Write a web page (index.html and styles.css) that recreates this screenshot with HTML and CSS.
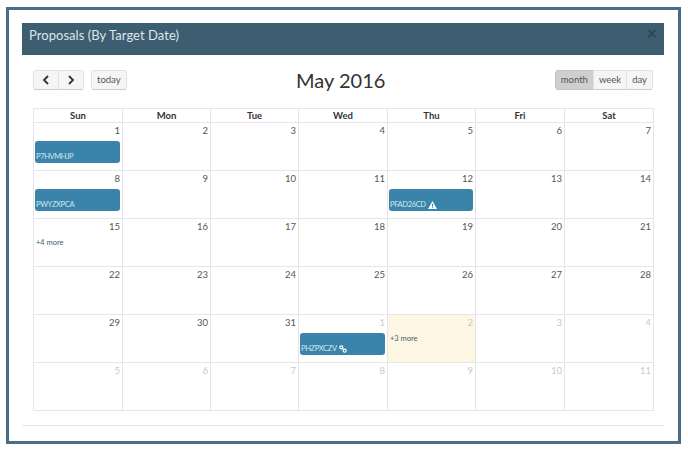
FILE: index.html
```html
<!DOCTYPE html>
<html lang="en">

<head>
    <meta charset="UTF-8">
    <meta name="viewport" content="width=device-width, initial-scale=1.0">
    <title>Proposals (By Target Date)</title>
    <link rel="stylesheet" href="styles.css">
</head>

<body>
    <div class="frame">
        <div class="modal-header">
            <h4>Proposals (By Target Date)</h4>
            <span class="close">&times;</span>
        </div>
        <div class="modal-body">
            <div class="toolbar">
                <div class="toolbar-left">
                    <div class="btn-group">
                        <button class="btn btn-icon">
                            <svg width="8" height="10" viewBox="0 0 8 10"><path d="M6 1 2 5l4 4" fill="none" stroke="#333" stroke-width="1.8"/></svg>
                        </button>
                        <button class="btn btn-icon">
                            <svg width="8" height="10" viewBox="0 0 8 10"><path d="M2 1l4 4-4 4" fill="none" stroke="#333" stroke-width="1.8"/></svg>
                        </button>
                    </div>
                    <button class="btn">today</button>
                </div>
                <h2>May 2016</h2>
                <div class="btn-group">
                    <button class="btn active">month</button>
                    <button class="btn">week</button>
                    <button class="btn">day</button>
                </div>
            </div>
            <table class="calendar">
                <thead>
                    <tr>
                        <th>Sun</th>
                        <th>Mon</th>
                        <th>Tue</th>
                        <th>Wed</th>
                        <th>Thu</th>
                        <th>Fri</th>
                        <th>Sat</th>
                    </tr>
                </thead>
                <tbody>
                    <tr>
                        <td><div class="num">1</div><div class="event">P7HVMHJP</div></td>
                        <td><div class="num">2</div></td>
                        <td><div class="num">3</div></td>
                        <td><div class="num">4</div></td>
                        <td><div class="num">5</div></td>
                        <td><div class="num">6</div></td>
                        <td><div class="num">7</div></td>
                    </tr>
                    <tr>
                        <td><div class="num">8</div><div class="event">PWYZXPCA</div></td>
                        <td><div class="num">9</div></td>
                        <td><div class="num">10</div></td>
                        <td><div class="num">11</div></td>
                        <td>
                            <div class="num">12</div>
                            <div class="event">PFAD26CD
                                <svg width="9" height="8" viewBox="0 0 10 9"><path fill-rule="evenodd" fill="#fff" d="M5 0l5 9H0zM4.4 3v3h1.2V3zm0 3.6v1.1h1.2V6.6z"/></svg>
                            </div>
                        </td>
                        <td><div class="num">13</div></td>
                        <td><div class="num">14</div></td>
                    </tr>
                    <tr>
                        <td><div class="num">15</div><a class="more">+4 more</a></td>
                        <td><div class="num">16</div></td>
                        <td><div class="num">17</div></td>
                        <td><div class="num">18</div></td>
                        <td><div class="num">19</div></td>
                        <td><div class="num">20</div></td>
                        <td><div class="num">21</div></td>
                    </tr>
                    <tr>
                        <td><div class="num">22</div></td>
                        <td><div class="num">23</div></td>
                        <td><div class="num">24</div></td>
                        <td><div class="num">25</div></td>
                        <td><div class="num">26</div></td>
                        <td><div class="num">27</div></td>
                        <td><div class="num">28</div></td>
                    </tr>
                    <tr>
                        <td><div class="num">29</div></td>
                        <td><div class="num">30</div></td>
                        <td><div class="num">31</div></td>
                        <td>
                            <div class="num other">1</div>
                            <div class="event">PHZPXCZV
                                <svg width="8" height="8" viewBox="0 0 9 9"><g fill="none" stroke="#fff" stroke-width="1.3"><circle cx="2.6" cy="2.6" r="1.7"/><circle cx="6.4" cy="6.4" r="1.7"/><path d="M3.6 3.6l1.8 1.8"/></g></svg>
                            </div>
                        </td>
                        <td class="today"><div class="num other">2</div><a class="more">+3 more</a></td>
                        <td><div class="num other">3</div></td>
                        <td><div class="num other">4</div></td>
                    </tr>
                    <tr>
                        <td><div class="num other">5</div></td>
                        <td><div class="num other">6</div></td>
                        <td><div class="num other">7</div></td>
                        <td><div class="num other">8</div></td>
                        <td><div class="num other">9</div></td>
                        <td><div class="num other">10</div></td>
                        <td><div class="num other">11</div></td>
                    </tr>
                </tbody>
            </table>
            <div class="footer-line"></div>
        </div>
    </div>
</body>

</html>
```

FILE: styles.css
```css
body {
    margin: 0;
    background-color: white;
    font-family: Lato, "Open Sans", sans-serif;
    color: #444;
}

.frame {
    box-sizing: border-box;
    width: 675px;
    height: 437px;
    margin: 7px 0 0 6px;
    padding: 13px 14px 0 13px;
    border: 3px solid #4a6f85;
    background-color: white;
}

.modal-header {
    display: flex;
    justify-content: space-between;
    height: 32px;
    padding: 0 7px;
    background-color: #3d5d70;
}

.modal-header h4 {
    margin: 0;
    font-size: 13px;
    font-weight: 400;
    line-height: 25px;
    color: #dfe6ea;
    letter-spacing: 0.05px;
}

.close {
    font-size: 18px;
    font-weight: 700;
    line-height: 20px;
    color: #2f4654;
}

.modal-body {
    padding: 15px 11px 0 11px;
}

.toolbar {
    display: flex;
    justify-content: space-between;
    align-items: center;
    height: 20px;
    margin-bottom: 18px;
}

.toolbar h2 {
    margin: 0;
    font-size: 20px;
    font-weight: 400;
    line-height: 26px;
    color: #333;
}

.toolbar-left {
    display: flex;
    gap: 7px;
}

.btn-group {
    display: flex;
}

.btn {
    height: 20px;
    padding: 0 5px;
    border: 1px solid #e2e2e2;
    border-bottom-color: #ccc;
    border-radius: 3px;
    background-color: #f5f5f5;
    font-family: inherit;
    font-size: 9.5px;
    line-height: 18px;
    color: #555;
}

.btn-icon {
    width: 26px;
    padding: 0;
}

.btn svg {
    display: block;
    margin: 0 auto;
}

.btn-group .btn {
    border-radius: 0;
    margin-left: -1px;
}

.btn-group .btn:first-child {
    border-radius: 3px 0 0 3px;
    margin-left: 0;
}

.btn-group .btn:last-child {
    border-radius: 0 3px 3px 0;
}

.btn.active {
    background-color: #cfcfcf;
    border-color: #c4c4c4;
}

.calendar {
    width: 621px;
    table-layout: fixed;
    border-collapse: collapse;
}

.calendar th,
.calendar td {
    border: 1px solid #e6e6e6;
    padding: 0;
}

.calendar th {
    width: 88px;
    height: 13px;
    font-size: 9.5px;
    font-weight: 700;
    line-height: 13px;
    color: #333;
}

.calendar th:nth-child(2),
.calendar th:nth-child(3),
.calendar th:nth-child(5) {
    width: 87px;
}

.calendar td {
    height: 47px;
    vertical-align: top;
}

.num {
    padding: 2px 2px 0 0;
    font-size: 9.5px;
    line-height: 12px;
    text-align: right;
    color: #555;
}

.num.other {
    color: #c9c9c9;
}

.today {
    background-color: #fdf6e3;
}

.event {
    display: flex;
    align-items: flex-end;
    gap: 2px;
    box-sizing: border-box;
    height: 22px;
    margin: 4px 2px 0 1px;
    padding: 0 1px 1px;
    border-radius: 3px;
    background-color: #3a84ab;
    font-size: 7.5px;
    letter-spacing: -0.35px;
    line-height: 10px;
    color: #d5e6ef;
}

.event svg {
    margin-bottom: 1px;
}

.more {
    display: block;
    margin: 5px 0 0 2px;
    font-size: 7.5px;
    line-height: 10px;
    color: #3d5d70;
}

.footer-line {
    height: 1px;
    margin: 14px -11px 0;
    background-color: #e8e8e8;
}
```
